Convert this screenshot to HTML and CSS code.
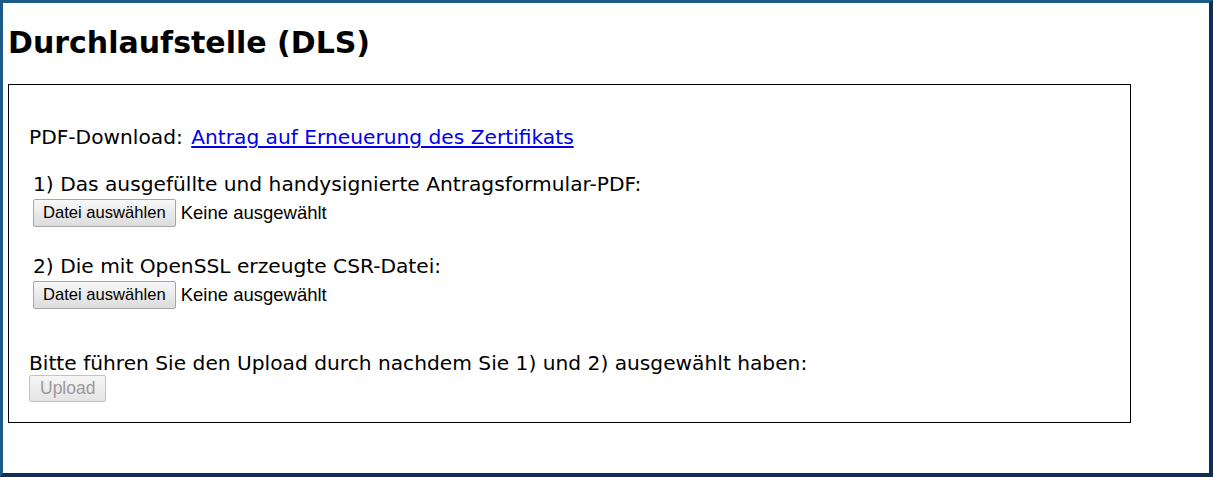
FILE: index.html
```html
<!DOCTYPE html>
<html lang="de">
<head>
    <meta charset="UTF-8" />
    <meta content="width=device-width, initial-scale=1.0" name="viewport" />
    <title>Durchlaufstelle (DLS)</title>
    <link rel="stylesheet" href="styles.css">
</head>
<body>

<div class="frame">
    <h1 class="title">Durchlaufstelle (DLS)</h1>

    <!-- Antrag hochladen -->
    <div class="panel">
        <p class="download">PDF-Download: <a href="#">Antrag auf Erneuerung des Zertifikats</a></p>

        <div class="field">
            <label class="field-label">1) Das ausgefüllte und handysignierte Antragsformular-PDF:</label>
            <div class="file-row">
                <button class="btn" type="button">Datei auswählen</button>
                <span class="file-name">Keine ausgewählt</span>
            </div>
        </div>

        <div class="field">
            <label class="field-label">2) Die mit OpenSSL erzeugte CSR-Datei:</label>
            <div class="file-row">
                <button class="btn" type="button">Datei auswählen</button>
                <span class="file-name">Keine ausgewählt</span>
            </div>
        </div>

        <p class="hint">Bitte führen Sie den Upload durch nachdem Sie 1) und 2) ausgewählt haben:</p>
        <button class="btn" id="uploadBtn" type="button" disabled>Upload</button>
    </div>
</div>

</body>
</html>
```

FILE: styles.css
```css
* {
    box-sizing: border-box;
    margin: 0;
    padding: 0;
}

html, body {
    height: 100%;
}

body {
    background: #fff;
    color: #000;
    font-family: 'DejaVu Sans', Verdana, sans-serif;
    font-size: 20.2px;
}

.frame {
    height: 100%;
    border-style: solid;
    border-width: 3px 4px 4px 3px;
    border-color: #1d5a86 #0c3059 #0c3059 #1d5a86;
    padding: 0 5px;
}

.title {
    font-size: 30px;
    font-weight: bold;
    padding-top: 22px;
    margin-bottom: 24px;
}

.panel {
    width: 1123px;
    border: 1px solid #000;
    padding: 20px;
}

.download {
    margin-top: 20px;
}

.download a {
    color: #0000ee;
    margin-left: 2px;
}

.field {
    padding-left: 4px;
    margin-top: 23px;
    margin-bottom: 27px;
}

.file-row {
    display: flex;
    align-items: center;
    margin-top: 3px;
}

.btn {
    font-family: 'Liberation Sans', Arial, sans-serif;
    font-size: 16.6px;
    color: #000;
    padding: 3px 9px;
    background: linear-gradient(#f8f8f8, #dcdcdc);
    border: 1px solid #a6a6a6;
    border-radius: 2px;
}

.file-name {
    font-family: 'Liberation Sans', Arial, sans-serif;
    font-size: 18.5px;
    margin-left: 5px;
}

.hint {
    margin-top: 42px;
}

#uploadBtn {
    font-size: 17.5px;
    padding: 2px 10px;
    color: #9a9a9a;
    background: linear-gradient(#f6f6f6, #e4e4e4);
    border-color: #c2c2c2;
}
```
